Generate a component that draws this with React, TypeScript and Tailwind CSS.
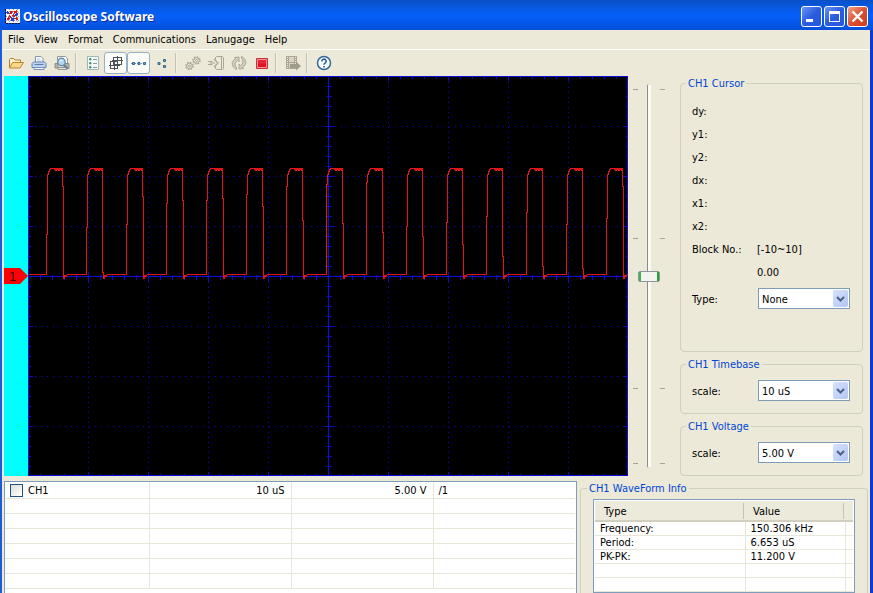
import React, { useState } from 'react';

const MENUS = ['File', 'View', 'Format', 'Communications', 'Lanugage', 'Help'];
const CURSOR_FIELDS = ['dy:', 'y1:', 'y2:', 'dx:', 'x1:', 'x2:'];

const MEASUREMENTS = [
    { type: 'Frequency:', value: '150.306 kHz' },
    { type: 'Period:', value: '6.653 uS' },
    { type: 'PK-PK:', value: '11.200 V' },
    { type: '', value: '' },
    { type: '', value: '' },
];

// Height at which each edge of a pulse moves over by one sample
const PULSES = [
    { rise: 158, fall: 110 },
    { rise: 151, fall: 196 },
    { rise: 148, fall: 120 },
    { rise: 127, fall: 124 },
    { rise: 124, fall: 122 },
    { rise: 118, fall: 130 },
    { rise: 110, fall: 144 },
    { rise: 108, fall: 147 },
    { rise: 106, fall: 156 },
    { rise: 150, fall: 160 },
    { rise: 146, fall: 168 },
    { rise: 140, fall: 180 },
    { rise: 136, fall: 190 },
    { rise: 148, fall: 192 },
    { rise: 142, fall: 110 },
];

const buildTrace = () => {
    let d = 'M0 198';
    PULSES.forEach((p, i) => {
        const x = 18 + i * 40;
        d += `H${x}V${p.rise}H${x + 1}V98H${x + 2}V95H${x + 3}V93H${x + 4}V92`;
        d += `H${x + 8}V93H${x + 9}V94H${x + 10}V93H${x + 12}V94H${x + 13}V93H${x + 15}V94H${x + 16}V92V${p.fall}`;
        d += `H${x + 17}V202H${x + 18}V200H${x + 20}V198`;
        // noise on the flat top and on the undershoot
        d += `M${x + 8} 92H${x + 16}M${x + 17} 199H${x + 20}M${x + 20} 198`;
    });
    return d + 'H600';
};

const range = (n: number) => Array.from({ length: n }, (_, i) => i);

const ScopeScreen: React.FC = () => (
    <svg viewBox="0 0 600 400" className="block w-full min-w-0 flex-1 bg-black" shapeRendering="crispEdges" role="img" aria-label="CH1 trace">
        <g stroke="#0a0ac8" fill="none" transform="translate(0.5 0.5)">
            {range(9).map((i) => (
                <path key={`v${i}`} d={`M${(i + 1) * 60} 0V400`} stroke="#0a0acc" strokeDasharray="1 4" />
            ))}
            {range(7).map((i) => (
                <path key={`h${i}`} d={`M0 ${(i + 1) * 50}H600`} stroke="#0a0acc" strokeDasharray="1 5" />
            ))}
            {range(50).map((i) => {
                const t = i % 5 === 0 ? 4 : 2;
                return <path key={`tx${i}`} d={`M${i * 12} 0v${t}M${i * 12} 399v-${t}M${i * 12} ${200 - t}v${t * 2 + 1}`} />;
            })}
            {range(40).map((i) => {
                const t = i % 5 === 0 ? 4 : 2;
                return <path key={`ty${i}`} d={`M0 ${i * 10}h${t}M599 ${i * 10}h-${t}M${300 - t} ${i * 10}h${t * 2 + 1}`} />;
            })}
            <path d="M0 200H600M300 0V400" stroke="#0d0de0" />
            <path d="M0 0H599V399H0Z" stroke="#0b0bdc" />
        </g>
        <path d={buildTrace()} fill="none" stroke="#e01616" transform="translate(0.5 0.5)" />
    </svg>
);

const AppIcon: React.FC = () => (
    <svg width="15" height="15" viewBox="0 0 15 15" shapeRendering="crispEdges" aria-hidden="true">
        <path d="M1 0h14v14H1z" fill="#f4f4f8" />
        <path d="M4.5 0v14M8.5 0v14M12.5 0v14M1 3.5h14M1 7.5h14M1 11.5h14" stroke="#9898b8" strokeDasharray="1 1" />
        <path d="M0.500 0v14.500h14.500" fill="none" stroke="#101030" strokeDasharray="2 1" />
        <path d="M2 11l2-2M5 5l2-3M8 6l2 2M9 4l3-2M11 9l2 2M4 7l2 1" fill="none" stroke="#d01818" strokeWidth="2" />
        <path d="M2 3l2 2M6 9l3 2M10 6l3-1M7 12l2-3" fill="none" stroke="#2a3cc0" strokeWidth="2" />
    </svg>
);

const Svg: React.FC<{ children: React.ReactNode }> = ({ children }) => (
    <svg width="16" height="16" viewBox="0 0 16 16" fill="none" aria-hidden="true">
        {children}
    </svg>
);

const OpenIcon = () => (
    <Svg>
        <path d="M1.5 12.5V4.5l1-1h3l1.5 1.5h5.5v2" fill="#fdf3cd" stroke="#b07c2c" />
        <path d="M1.5 13L4.5 7.5h11L12 13z" fill="#fbd78a" stroke="#c08430" strokeLinejoin="round" />
    </Svg>
);

const PrintIcon = () => (
    <Svg>
        <path d="M4.5 8V1.5h5.500l2 2V8" fill="#fff" stroke="#8494ac" />
        <path d="M6 4h3.500M6 6h4.500" stroke="#a9c4e4" />
        <path d="M1 8.500l1.500-1.500h11L15 8.500v4H1z" fill="#bcd2ee" stroke="#6886b4" />
        <path d="M3.500 9.500h9" stroke="#5e7eb0" />
        <path d="M3 12.500h10v2H3z" fill="#f2f6fc" stroke="#7c94bc" />
    </Svg>
);

const PreviewIcon = () => (
    <Svg>
        <path d="M3.500 8V1.500h8l2 2V9" fill="#fff" stroke="#999" />
        <path d="M1 8.500h3v4.500H1zM10 8.500h5v5h-5z" fill="#b4b4ae" stroke="#8c8c88" />
        <path d="M4 12.500h9v2H4z" fill="#e0e0dc" stroke="#999" />
        <circle cx="7.500" cy="7" r="3.700" fill="#b4d8f4" stroke="#6490b4" strokeWidth="1.400" />
        <path d="M10 10l3.500 3.500" stroke="#6c7c90" strokeWidth="2" />
        <path d="M5.500 6.500a2 2 0 0 1 3-1" stroke="#fff" />
    </Svg>
);

const ListIcon = () => (
    <Svg>
        <path d="M2.500 1.500h11v13h-11z" fill="#f4faf8" stroke="#9cb8b8" />
        <path d="M4.500 3.500h1.500v1.500H4.500zM4.500 7.500h1.500v1.500H4.500zM4.500 11.500h1.500V13H4.500z" fill="#3c9878" stroke="#3c8c70" strokeWidth=".8" />
        <path d="M8 4.500h4M8 8.500h4M8 12.500h4" stroke="#8a9a9c" />
    </Svg>
);

const CrossIcon = () => (
    <Svg>
        <path d="M5.500 2.500h8v7h-8zM2.500 6.500h7v7h-7zM9.500 1v13M4 5.500h11M6.500 5v10M1 10.500h11" stroke="#4c5258" shapeRendering="crispEdges" />
    </Svg>
);

const DotsLineIcon = () => (
    <Svg>
        <path d="M0 8.500h16" stroke="#6c94b4" strokeDasharray="1 1" />
        <path d="M1.500 7.500h2v2h-2zM7 7.500h2v2H7zM12.500 7.500h2v2h-2z" fill="#7cacd0" stroke="#34648c" />
    </Svg>
);

const DotsIcon = () => (
    <Svg>
        <path d="M4 7.500h2v2H4zM9.500 4.500h2v2h-2zM9.500 10.500h2v2h-2z" fill="#6ca0c8" stroke="#34688c" />
    </Svg>
);

const GearsIcon = () => (
    <Svg>
        <g stroke="#aaa698">
            <circle cx="4.500" cy="11" r="3.600" strokeWidth="1.400" strokeDasharray="1.500 1.320" />
            <circle cx="4.500" cy="11" r="2.800" />
            <circle cx="4.500" cy="11" r="1" />
            <circle cx="11.500" cy="5.500" r="3.600" strokeWidth="1.400" strokeDasharray="1.500 1.320" />
            <circle cx="11.500" cy="5.500" r="2.800" />
            <circle cx="11.500" cy="5.500" r="1" />
        </g>
    </Svg>
);

const ImportIcon = () => (
    <Svg>
        <path d="M7.500 4.500v-2l1-1h6l1 1v11l-1 1h-6l-1-1v-2M13.500 2v12" stroke="#aaa698" />
        <path d="M0 6.500h4.500M0 9.500h4.500M2 8h5M6 4l4 4-4 4" stroke="#aaa698" strokeWidth="1.200" />
    </Svg>
);

const RefreshIcon = () => (
    <Svg>
        <path d="M5.500 14.500C.5 12.500-.500 6 4.500 4L3.500 2.500 8 2v5L6.500 5.500C3.500 7 3.500 11 5.500 12.500z" fill="#d2cec0" stroke="#aaa698" />
        <path d="M10.500 1.500c5 2 6 8.500 1 10.500l1 1.500L8 14V9l1.500 1.500c3-1.500 3-5.500 1-7z" fill="#d2cec0" stroke="#aaa698" />
    </Svg>
);

const StopIcon = () => (
    <Svg>
        <path d="M2.500 3.500h11v10h-11z" fill="#e82834" stroke="#cc3038" />
        <path d="M3.500 4.500h9v8h-9z" stroke="#f49498" />
        <path d="M4 8.500h8V12H4z" fill="#e01420" />
    </Svg>
);

const ExportIcon = () => (
    <Svg>
        <path d="M1 1h11v13H1z" fill="#aaa698" />
        <path d="M4 2h5v5H4zM4 8h5v5H4z" fill="#d6d2c4" />
        <path d="M2.500 2v12M10.500 2v12" stroke="#e8e5d6" strokeDasharray="1 1" />
        <path d="M5 9h6V6.500l5 4.500-5 4.500V13H5z" fill="#9e9a8c" />
    </Svg>
);

const HelpIcon = () => (
    <Svg>
        <circle cx="8" cy="8" r="6.500" fill="#f8fcff" stroke="#34689c" strokeWidth="1.500" />
        <path d="M5.800 6.500a2.200 2.200 0 1 1 3.400 1.700C8.300 8.700 8 9 8 9.800" stroke="#24588c" strokeWidth="1.500" />
        <path d="M7.200 11h1.600v1.500H7.200z" fill="#24588c" />
    </Svg>
);

const TOOL_GROUPS = [
    [
        { name: 'Open', Icon: OpenIcon },
        { name: 'Print', Icon: PrintIcon },
        { name: 'Print preview', Icon: PreviewIcon },
    ],
    [
        { name: 'Channel list', Icon: ListIcon },
        { name: 'Grid', Icon: CrossIcon, pressed: true },
        { name: 'Line', Icon: DotsLineIcon, pressed: true },
        { name: 'Dots', Icon: DotsIcon },
    ],
    [
        { name: 'Settings', Icon: GearsIcon, disabled: true },
        { name: 'Connect', Icon: ImportIcon, disabled: true },
        { name: 'Refresh', Icon: RefreshIcon, disabled: true },
        { name: 'Stop', Icon: StopIcon },
    ],
    [{ name: 'Record', Icon: ExportIcon, disabled: true }],
    [{ name: 'Help', Icon: HelpIcon }],
] as { name: string; Icon: React.FC; pressed?: boolean; disabled?: boolean }[][];

const Toolbar: React.FC = () => (
    <div role="toolbar" className="flex h-[26px] items-center">
        {TOOL_GROUPS.map((group, i) => (
            <React.Fragment key={i}>
                {i > 0 && <div className="mr-[4px] ml-[2px] h-5 w-[2px] border-l border-[#c5c2b2] bg-[#f4f2e8]" />}
                {group.map(({ name, Icon, pressed, disabled }) => (
                    <button
                        key={name}
                        aria-label={name}
                        disabled={disabled}
                        className={`flex h-[22px] w-[23px] items-center justify-center ${pressed ? 'rounded-[3px] border border-[#98b0c4] bg-[#fbfbf8]' : ''}`}
                    >
                        <Icon />
                    </button>
                ))}
            </React.Fragment>
        ))}
    </div>
);

const TitleBar: React.FC = () => (
    <header className="flex h-[30px] items-center bg-linear-to-b from-[#0a50c8] via-[#0560f8] to-[#0450dc] px-[5px] pt-[2px]">
        <AppIcon />
        <h1 className="ml-[3px] flex-1 pt-[2px] font-['Noto_Sans',sans-serif] text-[12px] leading-4 font-bold text-white [text-shadow:1px_1px_#0a2a90]">
            Oscilloscope Software
        </h1>
        <div className="flex gap-[2px] pt-[1px]">
            <button aria-label="Minimize" className="h-[21px] w-[21px] rounded-[3px] border border-white bg-linear-to-br from-[#6a94f4] via-[#2a5ce0] to-[#2458dc]">
                <svg viewBox="0 0 19 19" className="block" aria-hidden="true"><path d="M4 12h7v3H4z" fill="#fff" /></svg>
            </button>
            <button aria-label="Maximize" className="h-[21px] w-[21px] rounded-[3px] border border-white bg-linear-to-br from-[#6a94f4] via-[#2a5ce0] to-[#2458dc]">
                <svg viewBox="0 0 19 19" className="block" aria-hidden="true"><path d="M4 4h11v11H4zM5 7v7h9V7z" fill="#fff" fillRule="evenodd" /></svg>
            </button>
            <button aria-label="Close" className="h-[21px] w-[21px] rounded-[3px] border border-white bg-linear-to-br from-[#f0a088] via-[#dc5030] to-[#c83c18]">
                <svg viewBox="0 0 19 19" className="block" aria-hidden="true"><path d="M4.500 4.500l10 10M14.500 4.500l-10 10" stroke="#fff" strokeWidth="2.400" /></svg>
            </button>
        </div>
    </header>
);

const Group: React.FC<{ title: string; className?: string; children: React.ReactNode }> = ({ title, className = '', children }) => (
    <fieldset className={`min-w-0 rounded-[4px] border border-[#d0d0bf] ${className}`}>
        <legend className="-ml-[6px] px-[2px] pt-px leading-[13px] text-[#0046d5]">{title}</legend>
        {children}
    </fieldset>
);

const SelectField: React.FC<{ id: string; label: string; options: string[] }> = ({ id, label, options }) => {
    const [value, setValue] = useState(options[0]);

    return (
        <div className="grid grid-cols-[66px_1fr] items-center">
            <label htmlFor={id} className="pt-[2px]">{label}</label>
            <div className="relative">
                <select
                    id={id}
                    value={value}
                    onChange={(e) => setValue(e.target.value)}
                    className="block h-[21px] w-full appearance-none border border-[#7f9db9] bg-white pt-[2px] pl-[3px]"
                >
                    {options.map((o) => (
                        <option key={o}>{o}</option>
                    ))}
                </select>
                <span className="pointer-events-none absolute top-[2px] right-[2px] bottom-[2px] flex w-[15px] items-center justify-center rounded-[2px] bg-linear-to-br from-[#d6e2fd] to-[#b2c6f2]">
                    <svg width="9" height="6" viewBox="0 0 9 6" aria-hidden="true">
                        <path d="M1 1l3.500 3.500L8 1" fill="none" stroke="#4d6185" strokeWidth="2" />
                    </svg>
                </span>
            </div>
        </div>
    );
};

const SliderTicks: React.FC = () => (
    <div className="flex w-[5px] flex-col pt-[5px] pb-[4px]">
        <div className="flex-[2] border-t border-[#a5a294]" />
        <div className="flex-[2] border-t border-[#a5a294]" />
        <div className="flex-1 border-y border-[#a5a294]" />
    </div>
);

const LevelSlider: React.FC = () => {
    const [level, setLevel] = useState(50);

    return (
        <div className="flex w-[52px] shrink-0 pt-2 pb-[8px] pl-[5px]">
            <SliderTicks />
            <input
                type="range"
                aria-label="CH1 position"
                value={level}
                onChange={(e) => setLevel(Number(e.target.value))}
                className="w-[22px] appearance-none bg-transparent [writing-mode:vertical-lr] [&::-webkit-slider-runnable-track]:w-[4px] [&::-webkit-slider-runnable-track]:rounded-[2px] [&::-webkit-slider-runnable-track]:border-l [&::-webkit-slider-runnable-track]:border-[#8f8d82] [&::-webkit-slider-runnable-track]:bg-[#fbfaf4] [&::-webkit-slider-thumb]:-ml-[10px] [&::-webkit-slider-thumb]:h-[11px] [&::-webkit-slider-thumb]:w-[22px] [&::-webkit-slider-thumb]:appearance-none [&::-webkit-slider-thumb]:rounded-[2px] [&::-webkit-slider-thumb]:border [&::-webkit-slider-thumb]:border-[#8a969e] [&::-webkit-slider-thumb]:bg-[linear-gradient(to_right,#3fb54a_2px,#f3f3ef_2px,#f3f3ef_18px,#22a030_18px)]"
            />
            <SliderTicks />
        </div>
    );
};

const ChannelTable: React.FC = () => (
    <div className="min-w-0 flex-1 border border-b-0 border-[#7f9db9] bg-white pr-px">
        <table className="w-full table-fixed border-collapse">
            <colgroup>
                <col className="w-[144px]" />
                <col className="w-[142px]" />
                <col className="w-[142px]" />
                <col />
            </colgroup>
            <tbody>
                <tr className="h-[16px] border-b border-[#e8e6d8] leading-[13px]">
                    <td className="border-r border-[#e8e6d8] p-0 pl-[5px]">
                        <label className="flex items-center gap-[5px] pt-[2px]">
                            <input type="checkbox" className="h-[13px] w-[13px] appearance-none border border-[#1d5281] bg-linear-to-br from-[#dcdcd7] to-white" />
                            CH1
                        </label>
                    </td>
                    <td className="border-r border-[#e8e6d8] p-0 pt-[2px] pr-[6px] text-right">10 uS</td>
                    <td className="border-r border-[#e8e6d8] p-0 pt-[2px] pr-[6px] text-right">5.00 V</td>
                    <td className="p-0 pt-[2px] pl-[5px]">/1</td>
                </tr>
                {range(6).map((i) => (
                    <tr key={i} className="h-[15px] border-b border-[#e8e6d8]">
                        <td className="border-r border-[#e8e6d8] p-0" />
                        <td className="border-r border-[#e8e6d8] p-0" />
                        <td className="border-r border-[#e8e6d8] p-0" />
                        <td className="p-0" />
                    </tr>
                ))}
            </tbody>
        </table>
    </div>
);

const WaveformTable: React.FC = () => (
    <div className="border border-[#7f9db9] bg-white px-px pt-px">
        <table className="w-full table-fixed border-collapse text-left">
            <colgroup>
                <col />
                <col className="w-[100px]" />
                <col className="w-[8px]" />
            </colgroup>
            <thead>
                <tr className="h-[20px] border-b-2 border-[#d2cfbe] bg-[#ebeadb]">
                    <th className="p-0 pl-[9px] font-normal">
                        <div className="mr-[1px] border-r border-[#c7c5b2] pt-[2px] leading-[14px]">Type</div>
                    </th>
                    <th className="p-0 pl-[8px] font-normal">
                        <div className="mr-[1px] border-r border-[#c7c5b2] pt-[2px] leading-[14px]">Value</div>
                    </th>
                    <td className="p-0" />
                </tr>
            </thead>
            <tbody>
                {MEASUREMENTS.map((m, i) => (
                    <tr key={i} className="h-[14px] border-b border-[#e8e6d8] leading-[13px]">
                        <td className="border-r border-[#e8e6d8] p-0 pl-[5px]">{m.type}</td>
                        <td className="border-r border-[#e8e6d8] p-0 pl-[5px]">{m.value}</td>
                        <td className="p-0" />
                    </tr>
                ))}
            </tbody>
        </table>
    </div>
);

const App: React.FC = () => {
    return (
        <div className="flex min-h-screen flex-col bg-[#ece9d8] font-['DejaVu_Sans_Condensed','DejaVu_Sans',sans-serif] text-[11px] leading-[14px] text-black">
            <TitleBar />
            <div className="flex flex-1 flex-col border-r-[3px] border-l-2 border-r-[#0a3cd0] border-l-[#1c5cdc]">
                <nav className="flex h-5 items-center border-b border-white pl-px">
                    {MENUS.map((m) => (
                        <button key={m} className="px-[5px] pt-px">{m}</button>
                    ))}
                </nav>
                <div className="flex flex-1 flex-col pl-[2px]">
                    <Toolbar />
                    <main className="flex">
                        <div className="flex w-6 shrink-0 items-center bg-[#00ffff]">
                            <svg width="24" height="16" viewBox="0 0 24 16" aria-label="Channel 1 zero level">
                                <path d="M0 0h16l8 8-8 8H0z" fill="#fe0000" />
                                <text x="5" y="13" fontSize="13" fill="#300000">1</text>
                            </svg>
                        </div>
                        <ScopeScreen />
                        <LevelSlider />
                        <aside className="mr-[7px] flex w-[183px] shrink-0 flex-col gap-[5px]">
                            <Group title="CH1 Cursor" className="flex-1 pt-[10px] pr-[12px] pl-[11px]">
                                <dl className="mb-[4px] grid auto-rows-[23px] grid-cols-[65px_1fr] items-center">
                                    {CURSOR_FIELDS.map((f) => (
                                        <React.Fragment key={f}>
                                            <dt>{f}</dt>
                                            <dd />
                                        </React.Fragment>
                                    ))}
                                    <dt>Block No.:</dt>
                                    <dd>[-10~10]</dd>
                                    <dd className="col-start-2">0.00</dd>
                                </dl>
                                <SelectField id="cursor-type" label="Type:" options={['None', 'Horizontal', 'Vertical']} />
                            </Group>
                            <Group title="CH1 Timebase" className="pt-[9px] pr-[12px] pb-[12px] pl-[11px]">
                                <SelectField id="timebase" label="scale:" options={['10 uS', '20 uS', '50 uS']} />
                            </Group>
                            <Group title="CH1 Voltage" className="pt-[9px] pr-[12px] pb-[12px] pl-[11px]">
                                <SelectField id="voltage" label="scale:" options={['5.00 V', '2.00 V', '1.00 V']} />
                            </Group>
                        </aside>
                    </main>
                    <section className="flex flex-1 gap-[3px] pt-[5px] pr-[2px]">
                        <ChannelTable />
                        <Group title="CH1 WaveForm Info" className="w-[288px] shrink-0 rounded-b-none border-b-0 px-[12px] pt-[4px]">
                            <WaveformTable />
                        </Group>
                    </section>
                </div>
            </div>
        </div>
    );
};

export default App;
